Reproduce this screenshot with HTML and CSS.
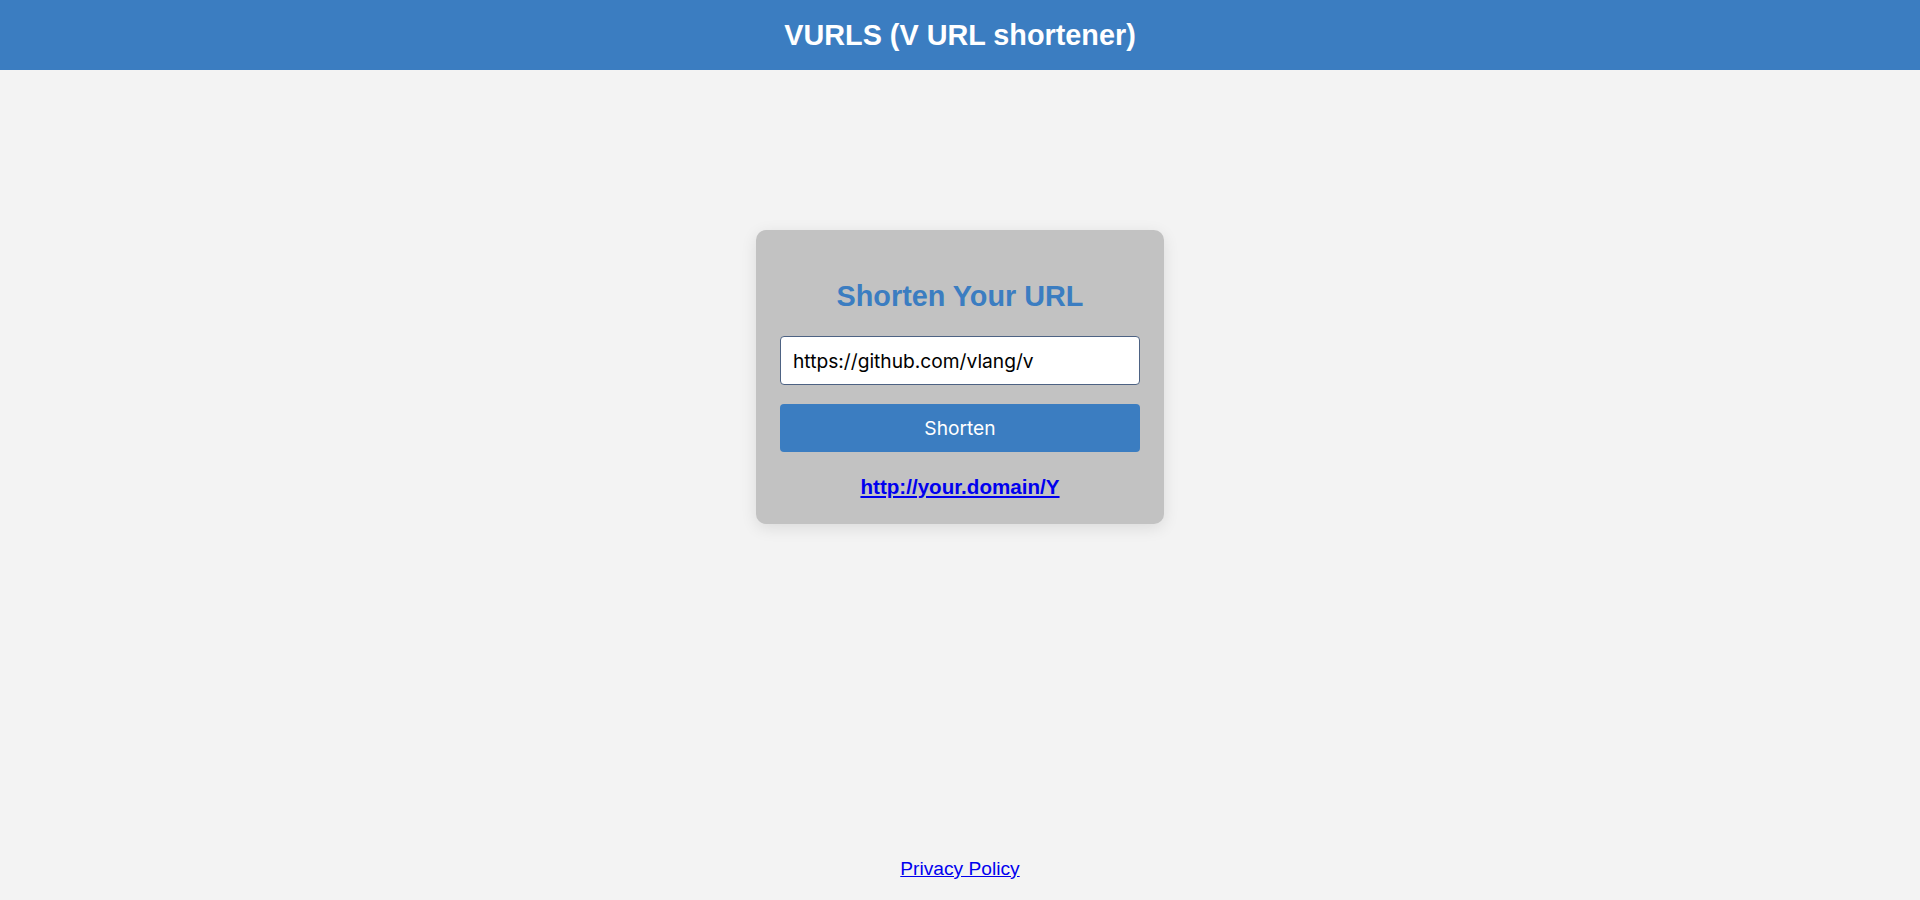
FILE: index.html
```html
<!DOCTYPE html>
<html lang="en">
<head>
<meta charset="utf-8">
<title>VURLS</title>
<link rel="stylesheet" href="styles.css">
</head>
<body>
<div class="page">
  <header class="topbar"><h1 class="brand">VURLS (V URL shortener)</h1></header>
  <main class="main">
    <div class="card">
      <h2 class="card-title">Shorten Your URL</h2>
      <input class="url-input" type="text" value="https://github.com/vlang/v">
      <button class="btn">Shorten</button>
      <a class="result" href="#">http://your.domain/Y</a>
    </div>
  </main>
  <footer class="footer"><a class="privacy" href="#">Privacy Policy</a></footer>
</div>
</body>
</html>
```
FILE: styles.css
```css
html, body { margin: 0; padding: 0; }
body { background: #f3f3f3; font-family: "Liberation Sans", Arial, sans-serif; }
.page { min-height: 100vh; display: flex; flex-direction: column; }
.topbar { height: 70px; background: #3b7dc1; display: flex; align-items: center; justify-content: center; }
.brand { margin: 0; color: #fff; font-size: 28.8px; font-weight: bold; }
.main { flex: 1; display: flex; justify-content: center; align-items: flex-start; padding-top: 160px; }
.card { width: 408px; box-sizing: border-box; background: #c2c2c2; border-radius: 10px; padding: 50px 24px 25px; box-shadow: 0 4px 16px rgba(0,0,0,0.1); display: flex; flex-direction: column; align-items: stretch; }
.card-title { margin: 0 0 24px; text-align: center; color: #3b7dc1; font-size: 28.8px; font-weight: bold; line-height: 32px; }
.url-input { height: 49px; box-sizing: border-box; border: 1px solid #4d6283; border-radius: 4px; padding: 0 12px; font-family: Inter, sans-serif; font-size: 19.2px; color: #000; background: #fff; }
.btn { margin-top: 19px; height: 48px; border: none; border-radius: 4px; background: #3b7dc1; color: #fff; font-family: Inter, sans-serif; font-size: 19.2px; }
.result { margin-top: 23px; align-self: center; color: #0000ee; font-weight: bold; font-size: 20.6px; text-decoration: underline; }
.footer { text-align: center; padding-bottom: 20px; }
.privacy { color: #0000ee; font-size: 19.2px; }
```
